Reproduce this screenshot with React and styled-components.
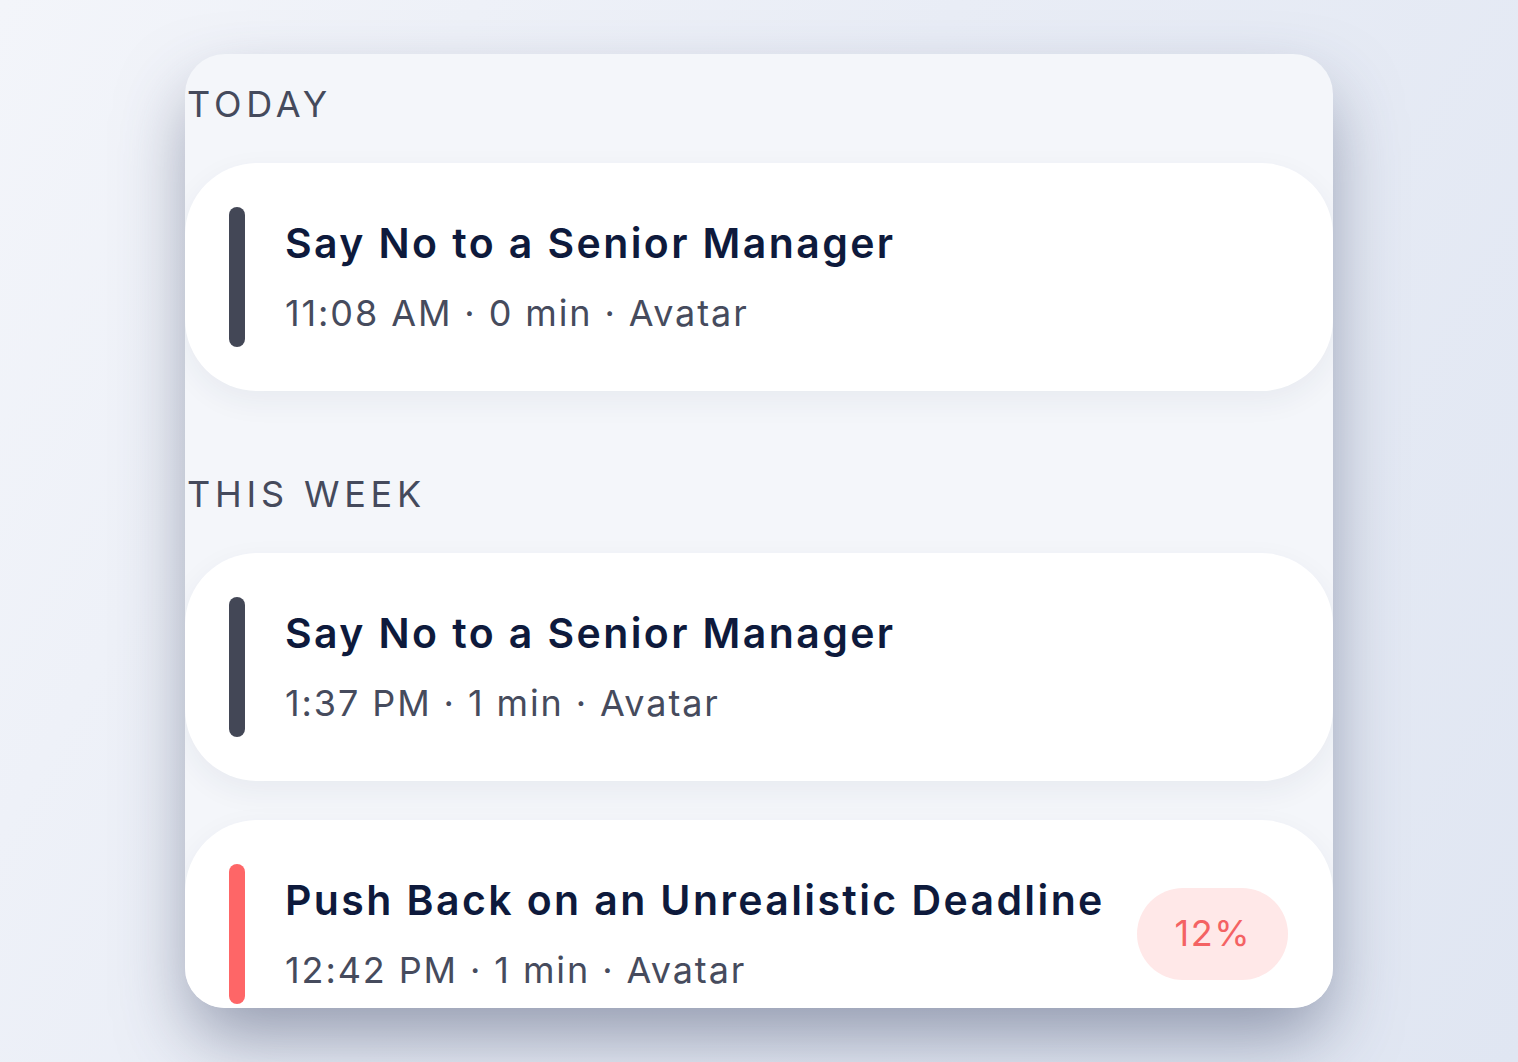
import React from "react";
import styled, { createGlobalStyle } from "styled-components";

const sessions = [
  {
    label: "TODAY",
    items: [
      { title: "Say No to a Senior Manager", time: "11:08 AM", length: "0 min", coach: "Avatar", tone: "dark" },
    ],
  },
  {
    label: "THIS WEEK",
    items: [
      { title: "Say No to a Senior Manager", time: "1:37 PM", length: "1 min", coach: "Avatar", tone: "dark" },
      { title: "Push Back on an Unrealistic Deadline", time: "12:42 PM", length: "1 min", coach: "Avatar", tone: "red", score: 12 },
    ],
  },
];

const App = () => {
  return (
    <>
      <GlobalStyle />
      <Page>
        <Panel>
          {sessions.map((section) => (
            <Section key={section.label}>
              <Label>{section.label}</Label>
              <List>
                {section.items.map((item, i) => (
                  <Card key={i}>
                    <Bar tone={item.tone} />
                    <Text>
                      <Title>{item.title}</Title>
                      <Meta>
                        {item.time} · {item.length} · {item.coach}
                      </Meta>
                    </Text>
                    {item.score != null && <Score>{item.score}%</Score>}
                  </Card>
                ))}
              </List>
            </Section>
          ))}
        </Panel>
      </Page>
    </>
  );
};

const GlobalStyle = createGlobalStyle`
  html, body {
    margin: 0;
    padding: 0;
  }
  body {
    font-family: Inter, "Noto Sans", sans-serif;
    background: linear-gradient(120deg, #f3f5fa 0%, #e9edf6 45%, #e0e6f2 100%);
  }
`;

const Page = styled.div`
  height: 100vh;
  display: flex;
  align-items: center;
  justify-content: center;
`;

const Panel = styled.div`
  width: 1148px;
  height: 954px;
  box-sizing: border-box;
  padding-top: 28px;
  overflow: hidden;
  background: #f4f6fa;
  border-radius: 40px;
  box-shadow: 0 34px 70px -6px rgba(62, 72, 104, 0.5);
  display: flex;
  flex-direction: column;
  gap: 81px;
`;

const Section = styled.section`
  display: flex;
  flex-direction: column;
`;

const Label = styled.div`
  padding-left: 2px;
  margin-bottom: 37px;
  font-size: 36px;
  letter-spacing: 4.8px;
  color: #454a5c;
`;

const List = styled.div`
  display: flex;
  flex-direction: column;
  gap: 39px;
`;

const Card = styled.div`
  flex-shrink: 0;
  display: flex;
  align-items: center;
  padding: 44px 45px 44px 44px;
  background: #ffffff;
  border-radius: 72px;
  box-shadow: 0 10px 30px rgba(40, 50, 90, 0.06);
`;

const Bar = styled.div`
  width: 16px;
  height: 140px;
  flex-shrink: 0;
  margin-right: 40px;
  border-radius: 8px;
  background: ${(p) => (p.tone === "red" ? "#fe6667" : "#434756")};
`;

const Text = styled.div`
  flex: 1;
  min-width: 0;
  display: flex;
  flex-direction: column;
  gap: 24px;
`;

const Title = styled.div`
  font-size: 41px;
  font-weight: 600;
  letter-spacing: 2.4px;
  white-space: nowrap;
  color: #0e1a3c;
  line-height: 1.2;
`;

const Meta = styled.div`
  font-size: 36px;
  letter-spacing: 1.9px;
  white-space: nowrap;
  color: #464b5d;
  line-height: 1.2;
`;

const Score = styled.div`
  flex-shrink: 0;
  margin-left: 30px;
  padding: 24px 37px 24px 38px;
  border-radius: 46px;
  background: #ffe8e8;
  color: #f46263;
  font-size: 36px;
  letter-spacing: 1.5px;
  line-height: 1.2;
`;

export default App;
